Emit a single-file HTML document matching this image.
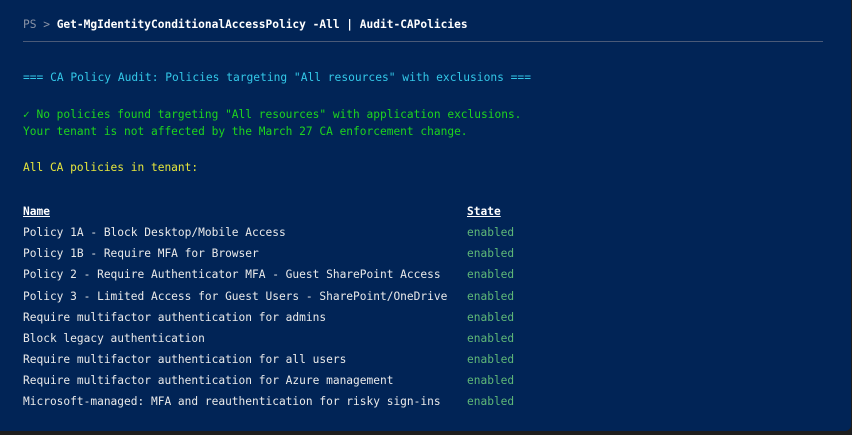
<!DOCTYPE html>
<html><head><meta charset="utf-8"><style>
html,body{margin:0;padding:0;background:#1e1e1e;width:852px;height:435px;overflow:hidden}
.p{position:absolute;left:0;top:0;width:851px;height:431px;background:#012456;border-radius:0 0 6px 0}
.t{position:absolute;left:23px;white-space:pre;font-family:"DejaVu Sans Mono","Liberation Mono",monospace;line-height:14px;font-size:11.2px}
.hr{position:absolute;left:23px;top:41px;width:800px;height:1px;background:#4a5a78}
.c{color:#eaeaea}.s{left:467px;color:#5fb878}
.h{font-weight:bold;text-decoration:underline;color:#fff}
</style></head><body><div class="p">
<div class="t" style="top:18px"><span style="color:#8a93a6">PS &gt; </span><b style="color:#fff">Get-MgIdentityConditionalAccessPolicy -All | Audit-CAPolicies</b></div>
<div class="hr"></div>
<div class="t" style="top:71px;font-size:11.25px;color:#33c8e8">=== CA Policy Audit: Policies targeting "All resources" with exclusions ===</div>
<div class="t" style="top:108px;font-size:11.2px;color:#1ed41e">✓ No policies found targeting "All resources" with application exclusions.</div>
<div class="t" style="top:125px;font-size:11.2px;color:#1ed41e">Your tenant is not affected by the March 27 CA enforcement change.</div>
<div class="t" style="top:161px;font-size:11.2px;color:#e6e63c">All CA policies in tenant:</div>
<div class="t h" style="top:205px">Name</div><div class="t h" style="top:205px;left:467px">State</div>
<div class="t c" style="top:226px">Policy 1A - Block Desktop/Mobile Access</div><div class="t s" style="top:226px">enabled</div>
<div class="t c" style="top:247px">Policy 1B - Require MFA for Browser</div><div class="t s" style="top:247px">enabled</div>
<div class="t c" style="top:268px">Policy 2 - Require Authenticator MFA - Guest SharePoint Access</div><div class="t s" style="top:268px">enabled</div>
<div class="t c" style="top:290px">Policy 3 - Limited Access for Guest Users - SharePoint/OneDrive</div><div class="t s" style="top:290px">enabled</div>
<div class="t c" style="top:311px">Require multifactor authentication for admins</div><div class="t s" style="top:311px">enabled</div>
<div class="t c" style="top:332px">Block legacy authentication</div><div class="t s" style="top:332px">enabled</div>
<div class="t c" style="top:353px">Require multifactor authentication for all users</div><div class="t s" style="top:353px">enabled</div>
<div class="t c" style="top:374px">Require multifactor authentication for Azure management</div><div class="t s" style="top:374px">enabled</div>
<div class="t c" style="top:395px">Microsoft-managed: MFA and reauthentication for risky sign-ins</div><div class="t s" style="top:395px">enabled</div>
</div></body></html>
